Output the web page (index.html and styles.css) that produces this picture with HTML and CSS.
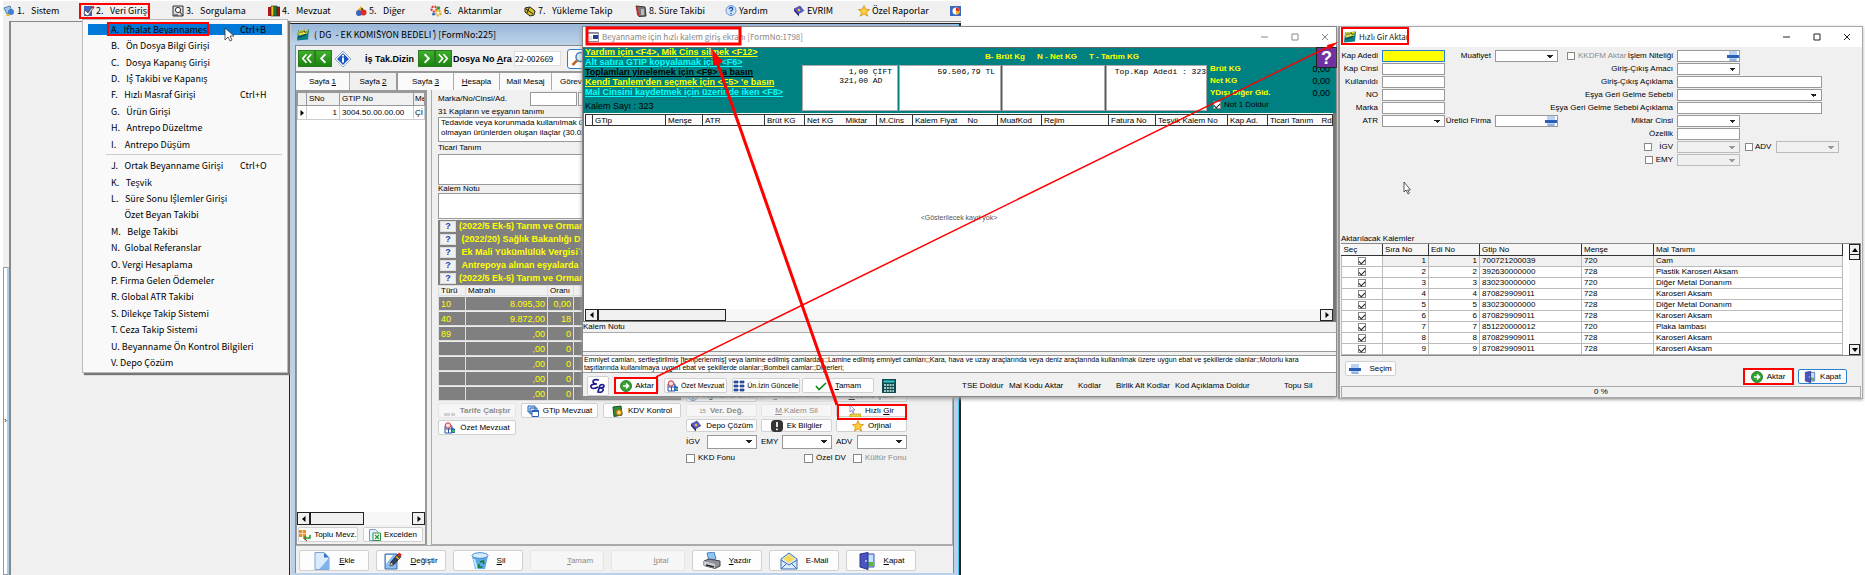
FILE: index.html
```html
<!DOCTYPE html>
<html lang="tr">
<head>
<meta charset="utf-8">
<title>Evrim - Veri Girişi</title>
<link rel="stylesheet" href="styles.css">
</head>
<body>
<svg class="defs" aria-hidden="true">
  <symbol id="i-monitor" viewBox="0 0 12 12"><path d="M1 3l6-2 2 5-5 3z" fill="#9bc8ee" stroke="#5a7fa8"/><circle cx="8" cy="7" r="3" fill="#3f7fd0"/><path d="M4 9h3v2H3z" fill="#e8b73a"/></symbol>
  <symbol id="i-pencil" viewBox="0 0 12 12"><path d="M1 1h8v10H1z" fill="#3c64b8"/><path d="M2 5l3 3 5-7 1 1-6 9-4-2z" fill="#fff" stroke="#333" stroke-width=".7"/><path d="M9 2l2 1" stroke="#d22" stroke-width="1.5"/></symbol>
  <symbol id="i-lens" viewBox="0 0 12 12"><path d="M1 1h10v10H1z" fill="#ddd" stroke="#333"/><circle cx="6" cy="5" r="2.6" fill="#fff" stroke="#333"/><path d="M8 7l3 4M2 10h4" stroke="#333"/></symbol>
  <symbol id="i-books" viewBox="0 0 12 12"><path d="M0 2h3v9H0z" fill="#b01818"/><path d="M3 1h3v10H3z" fill="#e8c820" stroke="#222" stroke-width=".6"/><path d="M6 1h3v10H6z" fill="#1c8a2c" stroke="#222" stroke-width=".6"/><path d="M9 2h3v9H9z" fill="#a81818" stroke="#222" stroke-width=".6"/></symbol>
  <symbol id="i-shapes" viewBox="0 0 12 12"><path d="M1 7l5-6 4 5z" fill="#f0b820"/><circle cx="4" cy="8" r="3" fill="#3c62c8"/><circle cx="8.500" cy="7.500" r="3" fill="#d83020"/><circle cx="7" cy="4" r="1" fill="#333"/></symbol>
  <symbol id="i-gears" viewBox="0 0 12 12"><circle cx="4" cy="4" r="2.500" fill="none" stroke="#d83a2a" stroke-width="2" stroke-dasharray="2 1"/><circle cx="8" cy="8" r="2.500" fill="none" stroke="#e0a818" stroke-width="2" stroke-dasharray="2 1"/><circle cx="8.500" cy="3" r="1.800" fill="#28a048"/><circle cx="3.500" cy="9" r="1.500" fill="#2870c0"/></symbol>
  <symbol id="i-truck" viewBox="0 0 12 12"><path d="M1 3l5-1 5 4-1 4-4 1-5-4z" fill="#d8c020" stroke="#222"/><path d="M2 4l7 5M5 3l-2 5" stroke="#222"/></symbol>
  <symbol id="i-cal" viewBox="0 0 12 12"><path d="M1 1l9 1 1 9-7 .5z" fill="#777" stroke="#333"/><path d="M1 1l1 9 2 1.500-1-9z" fill="#d02820"/><path d="M6 5h3M6 7h3M6 9h3" stroke="#fff"/></symbol>
  <symbol id="i-help" viewBox="0 0 12 12"><circle cx="6" cy="5.500" r="5" fill="#cfe4fa" stroke="#6a9ad0"/><path d="M4.300 4.200q0-1.700 1.700-1.700t1.700 1.600q0 1-1.700 1.900v.8M6 8v1.200" fill="none" stroke="#1850b0" stroke-width="1.300"/></symbol>
  <symbol id="i-book" viewBox="0 0 12 12"><path d="M1 4l6-3 4 5-5 3z" fill="#5a5ad0" stroke="#333370" stroke-width=".6"/><path d="M1 4l5 5v2.500L1 6z" fill="#282868"/><path d="M6 9l5-3v2l-5 3.500z" fill="#eee"/><circle cx="6" cy="5" r="1.300" fill="#f0c030"/></symbol>
  <symbol id="i-star" viewBox="0 0 12 12"><path d="M6 .5l1.600 3.800 4 .3-3 2.600 1 4L6 9l-3.600 2.200 1-4-3-2.600 4-.3z" fill="#ffcb38" stroke="#c98a10" stroke-width=".7"/></symbol>
  <symbol id="i-window" viewBox="0 0 12 12"><path d="M.5 1.500h11v9H.5z" fill="#fff" stroke="#889"/><path d="M1 2h10v1H1z" fill="#99a"/><path d="M6 4h5v4H6z" fill="#223c90"/><path d="M2 6h3M2 8h3" stroke="#bbb"/></symbol>
  <symbol id="i-paint" viewBox="0 0 12 12"><path d="M0 1h12v10H0z" fill="#3c68c0"/><circle cx="6" cy="6" r="3.500" fill="#fff"/><path d="M6 2.500a3.500 3.500 0 013.500 3.500H6z" fill="#e03020"/><path d="M6 6h3.500A3.500 3.500 0 016 9.500z" fill="#f0b020"/></symbol>
  <symbol id="i-evrim" viewBox="0 0 12 11"><path d="M1 1l11-1-1 10-11 1z" fill="#0b7f86"/><path d="M1 4l1-3 9-1-1 4-8 2z" fill="#e6e03a"/><path d="M2 4l2-2 1 1 2-2 1 2 2-1M1 8l8-3" fill="none" stroke="#123" stroke-width=".8"/></symbol>
  <symbol id="i-first" viewBox="0 0 16 16"><path d="M8 3.500L4 8l4 4.500M13 3.500L9 8l4 4.500" fill="none" stroke="#fff" stroke-width="1.800"/></symbol>
  <symbol id="i-prev" viewBox="0 0 16 16"><path d="M10 3.500L5.500 8l4.500 4.500" fill="none" stroke="#fff" stroke-width="2"/></symbol>
  <symbol id="i-next" viewBox="0 0 16 16"><path d="M6 3.500L10.500 8 6 12.500" fill="none" stroke="#fff" stroke-width="2"/></symbol>
  <symbol id="i-last" viewBox="0 0 16 16"><path d="M3 3.500L7 8l-4 4.500M8 3.500L12 8l-4 4.500" fill="none" stroke="#fff" stroke-width="1.800"/></symbol>
  <symbol id="i-info" viewBox="0 0 18 18"><path d="M9 1l8 8-8 8-8-8z" fill="#fff" stroke="#8ba6cc"/><path d="M9 3l6 6-6 6-6-6z" fill="#1c56c4"/><path d="M9 7.500v5M9 4.800v1.700" stroke="#fff" stroke-width="2"/></symbol>
  <symbol id="i-search" viewBox="0 0 16 16"><circle cx="9.500" cy="6" r="4.500" fill="#d4ecff" stroke="#4a7ab4" stroke-width="1.500"/><path d="M6 9.500L1.500 14" stroke="#b8692c" stroke-width="2.500"/></symbol>
  <symbol id="i-dots" viewBox="0 0 12 12"><path d="M1 8v3M3 8v3M5 8v3M8 8v3M10 8v3" stroke="#999" stroke-width=".8"/></symbol>
  <symbol id="i-stack" viewBox="0 0 12 12"><path d="M1 1h7v6H1zM3 3h7v6H3z" fill="#cfe3fa" stroke="#2860b8"/><path d="M5 5.500h6.500v6H5z" fill="#fff" stroke="#2860b8"/><path d="M5 5h6.500v2H5z" fill="#2860b8"/></symbol>
  <symbol id="i-kdv" viewBox="0 0 12 12"><path d="M1 2l8-1 1 9-8 1.500z" fill="#2c8c3c" stroke="#145020"/><circle cx="7" cy="7.500" r="3" fill="#f0b428" stroke="#99600c"/><circle cx="7" cy="7.500" r="1" fill="#fff"/></symbol>
  <symbol id="i-ozet" viewBox="0 0 12 12"><path d="M1 4h7v7H1z" fill="#fff" stroke="#2858a8"/><path d="M1 7h7M4.500 4v7" stroke="#2858a8"/><circle cx="4" cy="3.500" r="2.700" fill="#fdd" stroke="#c83030"/><path d="M7 5l4 2v4H7z" fill="#2c64c0"/><path d="M8 9h3" stroke="#5c5" stroke-width="1.500"/></symbol>
  <symbol id="i-bulk" viewBox="0 0 12 12"><path d="M0 1h7v7H0z" fill="#ee8c28"/><path d="M0 4.500h7M3.500 1v7" stroke="#fbd8a8"/><path d="M11 6v3H5m2-2L5 9l2 2" fill="none" stroke="#2c9a30" stroke-width="1.600"/><path d="M5 9l3 3" stroke="#c83020"/></symbol>
  <symbol id="i-excel" viewBox="0 0 12 12"><path d="M.5.500h6l3 3v8h-9z" fill="#e4effc" stroke="#7b9ccc"/><path d="M4 4h7.500v7.500H4z" fill="#fff" stroke="#2a9440"/><path d="M6 6l4 4m0-4l-4 4" stroke="#2a9440" stroke-width="1.300"/></symbol>
  <symbol id="i-page" viewBox="0 0 16 18"><path d="M1 .5h9l5 5v12H1z" fill="#d9ebfc" stroke="#7ba3d4"/><path d="M15 6v11.500H5z" fill="#7fb4ea"/><path d="M10 .5v5h5z" fill="#3576c8"/></symbol>
  <symbol id="i-edit" viewBox="0 0 18 18"><path d="M1 2h12v15H1z" fill="#8cbcf0" stroke="#3a6cae"/><path d="M2 3h7L2 12z" fill="#fff"/><path d="M6 14l1-4 7-8 3 2.500-7 8z" fill="#344468" stroke="#223"/><path d="M6 14l1-3.500 2 2z" fill="#edc98a"/><path d="M13 3l2-2.500 2.800 2L16 5z" fill="#d82818"/><path d="M12 4.500l3 2.500" stroke="#f0b020" stroke-width="1.500"/></symbol>
  <symbol id="i-bin" viewBox="0 0 18 18"><path d="M1 4l3 13h10l3-13z" fill="#5aa8e4"/><ellipse cx="9" cy="3.500" rx="8" ry="2.800" fill="#d4ecfc" stroke="#4a90d0"/><path d="M3 7l3 10" stroke="#c8e8ff" stroke-width="2"/><path d="M9 10l3-1 1 3M8 12l-.5 3h4" fill="none" stroke="#127a30" stroke-width="1.700"/></symbol>
  <symbol id="i-print" viewBox="0 0 18 18"><path d="M4 1l7-1 2 7-7 2z" fill="#8fc4f4" stroke="#4a80c0"/><path d="M1 9l5-2 11 2v5l-5 2.500-11-3z" fill="#8c9098" stroke="#444"/><path d="M1 9l11 3v4.500l-11-3z" fill="#c9ccd2"/><path d="M3 13l8 2" stroke="#222" stroke-width="1.500"/></symbol>
  <symbol id="i-mail" viewBox="0 0 18 18"><path d="M1 7l8-6 8 6v10H1z" fill="#dcecff" stroke="#3a6ab0"/><path d="M3 7l6-5 6 5-6 4z" fill="#f4dc60"/><path d="M1 8l8 5 8-5M1 17l6-6M17 17l-6-6" fill="none" stroke="#3a6ab0"/></symbol>
  <symbol id="i-door" viewBox="0 0 16 18"><path d="M8 2h7v13H8z" fill="#c0e4ff" stroke="#3a4cae"/><path d="M9 10h5v4H9z" fill="#56b840"/><path d="M1 2l8-1.500v17L1 15z" fill="#4a54c0" stroke="#2a3488"/><path d="M7 8v2" stroke="#fff"/></symbol>
  <symbol id="i-excl" viewBox="0 0 12 12"><rect width="12" height="12" rx="4" fill="#333"/><path d="M6 2v5M6 8.500v1.700" stroke="#fff" stroke-width="1.700"/></symbol>
  <symbol id="i-quick" viewBox="0 0 12 12"><path d="M1 0l5 5H3.500L5 8l-1 .5L2.500 5.500 1 7z" fill="#fff" stroke="#55a" stroke-width=".6"/><path d="M1 9h11v3H1z" fill="#ecd23c" stroke="#a88c10" stroke-width=".6"/></symbol>
  <symbol id="i-eb" viewBox="0 0 18 16"><path d="M10 2Q4 1 4 3.500T8 6Q1 6 2 9t7 0M11 7q4-1 4 1t-4 2q4 0 3 2.500T9 14l2-7" fill="none" stroke="#1c1c90" stroke-width="1.700"/></symbol>
  <symbol id="i-go" viewBox="0 0 12 12"><circle cx="6" cy="6" r="5.500" fill="#36a032" stroke="#1c6a1c" stroke-width=".8"/><path d="M3 6h5M6 3.500L8.500 6 6 8.500" fill="none" stroke="#fff" stroke-width="1.600"/></symbol>
  <symbol id="i-grid" viewBox="0 0 12 12"><path d="M1 1h4v2H1zM7 1h4v2H7zM1 5h4v2H1zM7 5h4v2H7zM1 9h4v2H1zM7 9h4v2H7z" fill="#2c5cb4" stroke="#1c3c88" stroke-width=".7"/></symbol>
  <symbol id="i-check" viewBox="0 0 12 12"><path d="M1 6l3 3.500L11 3" fill="none" stroke="#108a18" stroke-width="1.700"/></symbol>
  <symbol id="i-calc" viewBox="0 0 14 14"><path d="M0 0h14v14H0z" fill="#0c4a4e"/><path d="M1.500 1.500h11v2h-11z" fill="#30c8c8"/><path d="M2 6h10M2 9h10M2 12h10" stroke="#d8f0f0" stroke-width="1.700" stroke-dasharray="2 .8"/></symbol>
  <symbol id="i-bars" viewBox="0 0 12 10"><path d="M2 0h8v10H2z" fill="#bcd2f4"/><path d="M0 4h12v3H0z" fill="#2c5eb4"/><path d="M3 9h6" stroke="#6a90d0"/></symbol>
  <symbol id="i-left" viewBox="0 0 8 8"><path d="M5.500 1v6L2 4z"/></symbol>
  <symbol id="i-right" viewBox="0 0 8 8"><path d="M2.500 1v6L6 4z"/></symbol>
  <symbol id="i-up" viewBox="0 0 8 8"><path d="M1 6h6L4 2z"/></symbol>
  <symbol id="i-down" viewBox="0 0 8 8"><path d="M1 2h6L4 6z"/></symbol>
</svg>

<main class="desktop">
  <section class="app">
    <nav class="menubar">
      <a href="#"><svg><use href="#i-monitor"/></svg>1.&ensp; Sistem</a>
      <a href="#" class="current"><svg><use href="#i-pencil"/></svg>2.&ensp; Veri Girişi</a>
      <a href="#"><svg><use href="#i-lens"/></svg>3.&ensp; Sorgulama</a>
      <a href="#"><svg><use href="#i-books"/></svg>4.&ensp; Mevzuat</a>
      <a href="#"><svg><use href="#i-shapes"/></svg>5.&ensp; Diğer</a>
      <a href="#"><svg><use href="#i-gears"/></svg>6.&ensp; Aktarımlar</a>
      <a href="#"><svg><use href="#i-truck"/></svg>7.&ensp; Yükleme Takip</a>
      <a href="#"><svg><use href="#i-cal"/></svg>8. Süre Takibi</a>
      <a href="#"><svg><use href="#i-help"/></svg>Yardım</a>
      <a href="#"><svg><use href="#i-book"/></svg>EVRIM</a>
      <a href="#"><svg><use href="#i-star"/></svg>Özel Raporlar</a>
      <a href="#" aria-label="Pencere"><svg><use href="#i-paint"/></svg></a>
    </nav>
    <div class="client">
      <aside class="dock"><button type="button">›</button></aside>
      <div class="mdi"></div>
    </div>
  </section>

  <section class="window entry">
    <header class="titlebar"><svg><use href="#i-evrim"/></svg><h1>( DG&nbsp; - EK KOMİSYON BEDELİ ) [FormNo:225]</h1></header>
    <div class="entry-body">
      <div class="finder">
        <button type="button" class="nav" aria-label="İlk"><svg><use href="#i-first"/></svg></button>
        <button type="button" class="nav" aria-label="Önceki"><svg><use href="#i-prev"/></svg></button>
        <svg class="info"><use href="#i-info"/></svg>
        <b class="index">İş Tak.Dizin</b>
        <button type="button" class="nav" aria-label="Sonraki"><svg><use href="#i-next"/></svg></button>
        <button type="button" class="nav" aria-label="Son"><svg><use href="#i-last"/></svg></button>
        <label for="file-no">Dosya No <u>A</u>ra</label>
        <input id="file-no" value="22-002669">
        <button type="button" class="find" aria-label="Ara"><svg><use href="#i-search"/></svg></button>
      </div>
      <div class="tabs">
        <button type="button">Sayfa <u>1</u></button>
        <button type="button" class="on">Sayfa <u>2</u></button>
        <button type="button">Sayfa <u>3</u></button>
        <button type="button"><u>H</u>esapla</button>
        <button type="button">Mail Mesaj</button>
        <button type="button" class="part">Görev</button>
      </div>
      <div class="split">
        <div class="list">
          <table>
            <thead><tr><th></th><th>SNo</th><th>GTIP No</th><th>Me</th></tr></thead>
            <tbody><tr><td><svg><use href="#i-right"/></svg></td><td>1</td><td>3004.50.00.00.00</td><td>Çİ</td></tr></tbody>
          </table>
          <div class="scroll"><button type="button" aria-label="Sola"><svg><use href="#i-left"/></svg></button><i></i><button type="button" aria-label="Sağa"><svg><use href="#i-right"/></svg></button></div>
          <div class="list-actions">
            <button type="button" class="btn"><svg><use href="#i-bulk"/></svg>Toplu Mevz.</button>
            <button type="button" class="btn"><svg><use href="#i-excel"/></svg>Excelden</button>
          </div>
        </div>
        <div class="detail">
          <div class="brand"><label for="brand">Marka/No/Cinsi/Ad.</label><input id="brand"><input aria-label="No"></div>
          <label for="goods">31 Kapların ve eşyanın tanımı</label>
          <textarea id="goods" class="goods">Tedavide veya korunmada kullanılmak üzere
olmayan ürünlerden oluşan ilaçlar (30.02</textarea>
          <label for="trade">Ticari Tanım</label>
          <textarea id="trade" class="trade"></textarea>
          <label for="note">Kalem Notu</label>
          <textarea id="note" class="note"></textarea>
          <ul class="rules">
            <li><button type="button">?</button>(2022/5 Ek-5) Tarım ve Orman</li>
            <li><button type="button">?</button>&nbsp;(2022/20) Sağlık Bakanlığı D</li>
            <li><button type="button">?</button>&nbsp;Ek Mali Yükümlülük Vergisi`n</li>
            <li><button type="button">?</button>&nbsp;Antrepoya alınan eşyalarda t</li>
            <li><button type="button">?</button>(2022/5 Ek-5) Tarım ve Orman</li>
          </ul>
          <table class="tax">
            <thead><tr><th>Türü</th><th>Matrahı</th><th>Oranı</th><th></th></tr></thead>
            <tbody>
              <tr><td>10</td><td>8.095,30</td><td>0,00</td><td></td></tr>
              <tr><td>40</td><td>9.872,00</td><td>18</td><td></td></tr>
              <tr><td>89</td><td>,00</td><td>0</td><td></td></tr>
              <tr><td></td><td>,00</td><td>0</td><td></td></tr>
              <tr><td></td><td>,00</td><td>0</td><td></td></tr>
              <tr><td></td><td>,00</td><td>0</td><td></td></tr>
              <tr><td></td><td>,00</td><td>0</td><td></td></tr>
            </tbody>
          </table>
          <div class="tools">
            <button type="button" class="btn off"><svg><use href="#i-dots"/></svg><b>Tarife Çalıştır</b></button>
            <button type="button" class="btn"><svg><use href="#i-stack"/></svg>GTip Mevzuat</button>
            <button type="button" class="btn"><svg><use href="#i-kdv"/></svg>KDV Kontrol</button>
            <button type="button" class="btn"><svg><use href="#i-ozet"/></svg>Özet Mevzuat</button>
          </div>
          <div class="extras">
            <div class="extra-grid">
              <button type="button" class="btn"><svg><use href="#i-help"/></svg>Ağırlama Birim</button>
              <button type="button" class="btn off"><span><u>T</u>.Kalem Ekle</span></button>
              <button type="button" class="btn"><span><u>Ö</u>deme Şekli</span></button>
              <button type="button" class="btn off"><sup>15</sup><b>Ver. Değ.</b></button>
              <button type="button" class="btn off"><span><u>M</u>.Kalem Sil</span></button>
              <button type="button" class="btn"><svg><use href="#i-quick"/></svg><span>Hızlı <u>G</u>ir</span></button>
              <button type="button" class="btn"><svg><use href="#i-book"/></svg>Depo Çözüm</button>
              <button type="button" class="btn"><svg><use href="#i-excl"/></svg>Ek Bilgiler</button>
              <button type="button" class="btn"><svg><use href="#i-star"/></svg>Orjinal</button>
              <label>İGV <select></select></label>
              <label>EMY <select></select></label>
              <label>ADV <select></select></label>
            </div>
            <div class="funds">
              <label><input type="checkbox">KKD Fonu</label>
              <label><input type="checkbox">Özel DV</label>
              <label class="off"><input type="checkbox" disabled>Kültür Fonu</label>
            </div>
          </div>
        </div>
      </div>
      <footer class="commands">
        <button type="button" class="btn"><svg><use href="#i-page"/></svg><span><u>E</u>kle</span></button>
        <button type="button" class="btn"><svg><use href="#i-edit"/></svg><span><u>D</u>eğiştir</span></button>
        <button type="button" class="btn"><svg><use href="#i-bin"/></svg><span><u>S</u>il</span></button>
        <button type="button" class="btn off"><svg></svg><span><u>T</u>amam</span></button>
        <button type="button" class="btn off"><svg></svg><span><u>İ</u>ptal</span></button>
        <button type="button" class="btn"><svg><use href="#i-print"/></svg><span><u>Y</u>azdır</span></button>
        <button type="button" class="btn"><svg><use href="#i-mail"/></svg><span>E-Mail</span></button>
        <button type="button" class="btn"><svg><use href="#i-door"/></svg><span><u>K</u>apat</span></button>
      </footer>
    </div>
  </section>

  <section class="window quick">
    <header class="titlebar light"><svg><use href="#i-window"/></svg><h1>Beyanname için hızlı kalem giriş ekranı [FormNo:1798]</h1>
      <svg class="winbtns" viewBox="0 0 70 10"><path d="M1 5h7M32 2h6v6h-6zM62 2l6 6m0-6l-6 6" fill="none" stroke="#888"/></svg></header>
    <div class="summary">
      <div class="links">
        <a href="#">Yardım için &lt;F4&gt;, Mik Cins silmek &lt;F12&gt;</a>
        <a href="#" class="cyan">Alt satıra GTIP kopyalamak için &lt;F6&gt;</a>
        <a href="#" class="dark">Toplamları yinelemek için &lt;F9&gt; 'a basın</a>
        <a href="#">Kendi Tanlem'den seçmek için &lt;F5&gt; 'e basın</a>
        <a href="#" class="cyan">Mal Cinsini kaydetmek için üzerinde iken &lt;F8&gt;</a>
        <p>Kalem Sayı : 323</p>
      </div>
      <div class="totals">
        <p class="legend"><span>B- Brüt Kg</span><span>N - Net KG</span><span>T - Tartım KG</span></p>
        <div class="boxes">
          <pre>1,00 ÇİFT
321,00 AD  </pre>
          <pre>59.506,79 TL</pre>
          <pre></pre>
          <pre>Top.Kap Adedi : 323</pre>
        </div>
      </div>
      <dl class="weights">
        <dt>Brüt KG</dt><dd>0,00</dd>
        <dt>Net KG</dt><dd>0,00</dd>
        <dt>YDışı Diğer Gid.</dt><dd>0,00</dd>
        <dt class="full"><label><input type="checkbox" checked>Not 1 Doldur</label></dt>
      </dl>
      <button type="button" class="qmark">?</button>
    </div>
    <div class="grid-area">
      <table>
        <thead><tr><th></th><th>GTip</th><th>Menşe</th><th>ATR</th><th>Brüt KG</th><th class="open">Net KG</th><th>Miktar</th><th>M.Cins</th><th class="open">Kalem Fiyat</th><th>No</th><th>MuafKod</th><th>Rejim</th><th>Fatura No</th><th>Teşvik Kalem No</th><th>Kap Ad.</th><th class="open">Ticari Tanım</th><th>Rd</th></tr></thead>
      </table>
      <p>&lt;Gösterilecek kayıt yok&gt;</p>
      <div class="scroll"><button type="button" aria-label="Sola"><svg><use href="#i-left"/></svg></button><i></i><button type="button" aria-label="Sağa"><svg><use href="#i-right"/></svg></button></div>
    </div>
    <label class="note-label" for="q-note">Kalem Notu</label>
    <textarea id="q-note" class="q-note"></textarea>
    <textarea class="q-desc" aria-label="Tanım">Emniyet camları, sertleştirilmiş [temperlenmiş] veya lamine edilmiş camlardan:;Lamine edilmiş emniyet camları;;Kara, hava ve uzay araçlarında veya deniz araçlarında kullanılmak üzere uygun ebat ve şekillerde olanlar:;Motorlu kara
taşıtlarında kullanılmaya uygun ebat ve şekillerde olanlar:;Bombeli camlar:;Diğerleri;</textarea>
    <footer class="q-bar">
      <button type="button" class="btn logo" aria-label="Evrim"><svg><use href="#i-eb"/></svg></button>
      <button type="button" class="btn send"><svg><use href="#i-go"/></svg>Aktar</button>
      <button type="button" class="btn law"><svg><use href="#i-ozet"/></svg>Özet Mevzuat</button>
      <button type="button" class="btn upd"><svg><use href="#i-grid"/></svg>Ün.İzin Güncelle</button>
      <button type="button" class="btn ok"><svg><use href="#i-check"/></svg><span><u>T</u>amam</span></button>
      <svg class="calc"><use href="#i-calc"/></svg>
      <div class="fills">
        <button type="button">TSE Doldur</button><button type="button">Mal Kodu Aktar</button><button type="button">Kodlar</button><button type="button">Birlik Alt Kodlar</button><button type="button">Kod Açıklama Doldur</button><button type="button">Topu Sil</button>
      </div>
    </footer>
  </section>

  <section class="window transfer">
    <header class="titlebar light"><svg><use href="#i-evrim"/></svg><h1>Hızlı Gir Aktar</h1>
      <svg class="winbtns" viewBox="0 0 70 10"><path d="M1 5h7M32 2h6v6h-6zM62 2l6 6m0-6l-6 6" fill="none" stroke="#222"/></svg></header>
    <form class="form">
      <div class="col one">
        <label for="a1">Kap Adedi</label><input id="a1" class="focus">
        <label for="a2">Kap Cinsi</label><input id="a2">
        <label for="a3">Kullanıldı</label><input id="a3">
        <label for="a4">NO</label><input id="a4">
        <label for="a5">Marka</label><input id="a5">
        <label for="a6">ATR</label><select id="a6"></select>
      </div>
      <div class="col two">
        <label for="b1">Muafiyet</label><select id="b1"></select>
        <label for="b2" class="last">Üretici Firma</label><span class="lookup last"><input id="b2"><svg><use href="#i-bars"/></svg></span>
      </div>
      <label class="off kkdf"><input type="checkbox" disabled>KKDFM Aktar</label>
      <div class="col three">
        <label for="c1">İşlem Niteliği</label><span class="lookup"><input id="c1"><svg><use href="#i-bars"/></svg></span>
        <label for="c2">Giriş-Çıkış Amacı</label><select id="c2"></select>
        <label for="c3">Giriş-Çıkış Açıklama</label><input id="c3" class="wide">
        <label for="c4">Eşya Geri Gelme Sebebi</label><select id="c4" class="wide"></select>
        <label for="c5">Eşya Geri Gelme Sebebi Açıklama</label><input id="c5" class="wide">
        <label for="c6">Miktar Cinsi</label><select id="c6"></select>
        <label for="c7">Özellik</label><input id="c7">
        <label class="tick"><input type="checkbox">İGV</label><div class="pair"><select disabled aria-label="İGV"></select><label><input type="checkbox">ADV</label><select disabled aria-label="ADV"></select></div>
        <label class="tick"><input type="checkbox">EMY</label><select disabled aria-label="EMY"></select>
      </div>
    </form>
    <h2>Aktarılacak Kalemler</h2>
    <div class="items">
      <table>
        <thead><tr><th>Seç</th><th>Sıra No</th><th>Edi No</th><th>Gtip No</th><th>Menşe</th><th>Mal Tanımı</th></tr></thead>
        <tbody>
          <tr class="sel"><td><input type="checkbox" checked aria-label="1"></td><td>1</td><td>1</td><td>700721200039</td><td>720</td><td>Cam</td></tr>
          <tr><td><input type="checkbox" checked aria-label="2"></td><td>2</td><td>2</td><td>392630000000</td><td>728</td><td>Plastik Karoseri Aksam</td></tr>
          <tr><td><input type="checkbox" checked aria-label="3"></td><td>3</td><td>3</td><td>830230000000</td><td>720</td><td>Diğer Metal Donanım</td></tr>
          <tr><td><input type="checkbox" checked aria-label="4"></td><td>4</td><td>4</td><td>870829909011</td><td>728</td><td>Karoseri Aksam</td></tr>
          <tr><td><input type="checkbox" checked aria-label="5"></td><td>5</td><td>5</td><td>830230000000</td><td>728</td><td>Diğer Metal Donanım</td></tr>
          <tr><td><input type="checkbox" checked aria-label="6"></td><td>6</td><td>6</td><td>870829909011</td><td>728</td><td>Karoseri Aksam</td></tr>
          <tr><td><input type="checkbox" checked aria-label="7"></td><td>7</td><td>7</td><td>851220000012</td><td>720</td><td>Plaka lambası</td></tr>
          <tr><td><input type="checkbox" checked aria-label="8"></td><td>8</td><td>8</td><td>870829909011</td><td>728</td><td>Karoseri Aksam</td></tr>
          <tr><td><input type="checkbox" checked aria-label="9"></td><td>9</td><td>9</td><td>870829909011</td><td>728</td><td>Karoseri Aksam</td></tr>
        </tbody>
      </table>
      <div class="vscroll"><button type="button" aria-label="Yukarı"><svg><use href="#i-up"/></svg></button><i></i><button type="button" aria-label="Aşağı"><svg><use href="#i-down"/></svg></button></div>
    </div>
    <footer class="t-bar">
      <button type="button" class="btn pick"><svg><use href="#i-bars"/></svg>Seçim</button>
      <button type="button" class="btn go"><svg><use href="#i-go"/></svg>Aktar</button>
      <button type="button" class="btn close"><svg><use href="#i-door"/></svg>Kapat</button>
    </footer>
    <div class="progress">0 %</div>
  </section>

  <div class="dropdown" role="menu">
    <a href="#" class="hot"><span>A.&ensp;İthalat Beyannamesi</span><kbd>Ctrl+B</kbd></a>
    <a href="#">B.&ensp; Ön Dosya Bilgi Girişi</a>
    <a href="#">C.&ensp; Dosya Kapanış Girişi</a>
    <a href="#">D.&ensp; İş Takibi ve Kapanış</a>
    <a href="#"><span>F.&ensp; Hızlı Masraf Girişi</span><kbd>Ctrl+H</kbd></a>
    <a href="#">G.&ensp; Ürün Girişi</a>
    <a href="#">H.&ensp; Antrepo Düzeltme</a>
    <a href="#">I.&ensp;&nbsp; Antrepo Düşüm</a>
    <hr>
    <a href="#"><span>J.&ensp; Ortak Beyanname Girişi</span><kbd>Ctrl+O</kbd></a>
    <a href="#">K.&ensp; Teşvik</a>
    <a href="#">L.&ensp; Süre Sonu İşlemler Girişi</a>
    <a href="#">&emsp;&ensp;Özet Beyan Takibi</a>
    <a href="#">M.&ensp; Belge Takibi</a>
    <a href="#">N.&ensp;Global Referanslar</a>
    <a href="#">O. Vergi Hesaplama</a>
    <a href="#">P. Firma Gelen Ödemeler</a>
    <a href="#">R. Global ATR Takibi</a>
    <a href="#">S. Dilekçe Takip Sistemi</a>
    <a href="#">T. Ceza Takip Sistemi</a>
    <a href="#">U. Beyanname Ön Kontrol Bilgileri</a>
    <a href="#">V. Depo Çözüm</a>
  </div>

  <svg class="marks" viewBox="0 0 1865 575" aria-hidden="true">
    <g fill="none" stroke="#f00" stroke-width="2">
      <path d="M80 4h69v14H80zM108 23h100v12H108zM615 378h42v15h-42zM838 405h68v14h-68zM1342 28h66v16h-66zM1744 369h49v15h-49z"/>
      <path d="M587 28h153v16H587z" stroke-width="3"/>
      <path d="M837 405L717 62" stroke-width="3"/>
      <path d="M656 377L1330 46" stroke-width="1.500"/>
    </g>
    <path d="M712 49l11 13-10 4zM1338 42l-9 8-2-5z" fill="#f00"/>
    <g fill="#fff" stroke="#333" stroke-width=".8">
      <path d="M225 28v12l3-3 2 4 2-1-2-4h4z"/>
      <path d="M1404 182v10l2-2 2 4 1.500-1-2-3h3z"/>
    </g>
  </svg>
</main>
</body>
</html>
```
FILE: styles.css
```css
:root {
  --menu: "Noto Sans CJK SC", "Open Sans", sans-serif;
  --ui: "Liberation Sans", Arial, sans-serif;
  --face: #f0f0f0;
}
* { box-sizing: border-box; }
body { margin: 0; background: #fff; font: 8px/10px var(--ui); color: #000; }
button, input, select, textarea { font: inherit; color: inherit; margin: 0; padding: 0; border-radius: 0; }
button { background: none; border: 0; white-space: nowrap; }
a { color: inherit; text-decoration: none; }
h1, h2, p, ul, dl, dd, pre { margin: 0; padding: 0; font: inherit; }
svg { width: 12px; height: 12px; flex: none; }
.defs { position: absolute; width: 0; height: 0; }
table { border-collapse: collapse; table-layout: fixed; width: 100%; }
th { font-weight: 400; text-align: left; }
th, td { padding: 0 2px; overflow: hidden; white-space: nowrap; }
label { white-space: nowrap; }
.off { color: #8c8c8c; }

input:not([type]), select, textarea {
  background: #fff; border: 1px solid #999; outline: 0; min-width: 0;
}
textarea { resize: none; overflow: hidden; display: block; width: 100%; padding: 0 2px; }
select {
  appearance: none;
  background-image: conic-gradient(from 315deg at 50% 100%, #222 0 90deg, #fff 0);
  background-position: right 4px center;
  background-size: 6px 3px;
  background-repeat: no-repeat;
}
input[type="checkbox"] {
  appearance: none; width: 9px; height: 9px; border: 1px solid #888; background: #fff; flex: none;
  display: grid; place-items: center;
}
input[type="checkbox"]:checked::after {
  content: ""; width: 3px; height: 5px; margin-bottom: 1px;
  border: solid #222; border-width: 0 1px 1px 0; transform: rotate(45deg);
}
.btn {
  display: flex; align-items: center; justify-content: center; gap: 4px;
  background: #fdfdfd; border: 1px solid #d0d0d0; border-radius: 2px;
}
.btn.off { background: #f6f6f6; border-color: #e6e6e6; }

.desktop { position: relative; min-height: 100vh; overflow: hidden; }
.marks { position: absolute; left: 0; top: 0; width: 1865px; height: 575px; pointer-events: none; }

/* main application */
.app { position: absolute; left: 3px; top: 1px; bottom: 0; width: 958px; background: var(--face); display: flex; flex-direction: column; overflow: hidden; }
.menubar {
  height: 20px; display: grid; align-items: center; font: 9px/12px var(--menu);
  grid-template-columns: 80px 89px 96px 87px 75px 94px 111px 90px 68px 65px 92px 12px;
}
.menubar a { display: flex; align-items: center; gap: 2px; white-space: nowrap; }
.menubar .current { gap: 1px; }
.client { flex: 1; display: flex; }
.dock { width: 6px; padding-top: 246px; display: flex; }
.dock button { flex: 1; border: 1px solid #999; border-right: 2px solid #a8cde8; background: #fff; line-height: 10px; }
.mdi { flex: 1; border: solid #888; border-width: 1px 0 0 2px; }

.dropdown {
  position: absolute; left: 82px; top: 19px; width: 206px; height: 354px; padding: 1px 5px;
  display: flex; flex-direction: column; background: #f9f9f9; font: 9px/11px var(--menu);
  border: 1px solid #bbb; box-shadow: 2px 2px 1px #777;
}
.dropdown a { flex: 1; display: flex; align-items: center; justify-content: space-between; padding: 0 15px 0 23px; white-space: nowrap; }
.dropdown hr { align-self: stretch; height: 1px; margin: 2px 0 2px 18px; border: 0; background: #ccc; }
.dropdown kbd { font: inherit; width: 27px; }
.dropdown .hot { background: linear-gradient(#0078d7, #0078d7) center / 100% 11px no-repeat; }

/* windows */
.window { position: absolute; display: flex; flex-direction: column; background: var(--face); }
.titlebar { display: flex; align-items: center; gap: 5px; font: 9px/12px var(--menu); height: 21px; padding: 0 6px; flex: none; }
.titlebar h1 { white-space: nowrap; }
.titlebar.light { background: #fff; color: #888; height: 20px; font-size: 8px; gap: 3px; padding-left: 4px; }
.titlebar .winbtns { width: 70px; height: 10px; margin-left: auto; }

.entry { left: 289px; top: 23px; bottom: 0; width: 672px; padding: 0 5px 2px; background: #b9d1ea; border: solid #222; border-width: 1px 2px 0 1px; box-shadow: inset -1px 0 #4fc8f0, inset 1px 0 #ddd; }
.entry > .titlebar { background: linear-gradient(#99b7d9, #bed3ea); margin: 0 -4px; }
.entry-body { flex: 1; display: flex; flex-direction: column; background: var(--face); border: 1px solid #888; border-bottom: 0; }
.finder { height: 25px; display: flex; align-items: center; font: bold 9px/12px var(--ui); padding-left: 2px; }
.nav { width: 17px; height: 17px; background: linear-gradient(#3fae2c, #1c8412); border: 1px solid #2a7a20; display: flex; }
.nav svg { width: 100%; height: 100%; }
.finder .info { width: 18px; height: 18px; margin: 0 9px 0 2px; }
.finder .index { width: 57px; text-align: center; }
.finder input { width: 47px; height: 15px; font: 8px/10px var(--menu); border-color: #ddd; margin-right: 6px; }
.finder label { padding-left: 1px; width: 62px; }
.find { width: 24px; height: 20px; border: 1px solid #2a7fd0; border-radius: 3px; background: #fff; display: flex; align-items: center; padding-left: 3px; }
.find svg { width: 16px; height: 16px; }
.tabs { display: grid; grid-template-columns: 54px 48px 56px 46px 52px 60px; height: 19px; background: #fafafa; border-top: 2px solid #999; }
.tabs button { border-right: 1px solid #aaa; line-height: 14px; }
.tabs .on { background: var(--face); border-right: 2px solid #999; }
.tabs .part { text-align: left; padding-left: 8px; }
.split { flex: 1; display: flex; }
.list { width: 131px; display: flex; flex-direction: column; background: #fff; border: 1px solid #999; border-width: 2px 2px 1px 1px; }
.list table { border-right: 1px solid #ccc; }
.list th { background: var(--face); border: 1px solid #999; height: 13px; }
.list td { border: 1px solid #ccc; height: 14px; }
.list tr > :nth-child(1) { width: 9px; padding: 0; }
.list tr > :nth-child(2) { width: 33px; }
.list tr > :nth-child(3) { width: 74px; }
.list tr > :nth-child(4) { padding: 0 1px; }
.list td:nth-child(2) { text-align: right; }
.list td svg { width: 8px; height: 8px; display: block; }
.scroll { display: flex; height: 13px; background: #f7f7f7; margin-top: auto; }
.scroll button { width: 13px; border: 1px solid #222; background: var(--face); display: flex; align-items: center; justify-content: center; }
.scroll svg, .vscroll svg { width: 8px; height: 8px; }
.scroll i { width: 54px; border: 1px solid #222; background: var(--face); }
.scroll button:last-child { margin-left: auto; }
.list-actions { display: grid; grid-template-columns: 60px 60px; gap: 5px; padding: 2px 1px; background: var(--face); }
.list-actions .btn { height: 15px; gap: 3px; }
.detail {
  flex: 1; display: grid; grid-template-columns: 1fr; align-content: start; padding: 1px 0 0 6px; margin-left: 4px;
  border: solid #aaa; border-width: 0 1px 1px 1px; position: relative;
}
.brand { display: grid; grid-template-columns: 91px 47px 60px; gap: 1px; height: 15px; align-items: center; }
.brand input { height: 14px; }
.detail > label { line-height: 11px; }
.goods { height: 25px; }
.trade { height: 31px; }
.note { height: 26px; }
.goods + label { line-height: 12px; }
.trade + label { line-height: 8px; }
.rules { list-style: none; margin-top: 1px; background: #808080; color: #ff0; font: bold 9px/11px var(--ui); padding: 1px 0 0 2px; height: 65px; display: grid; grid-auto-rows: 11px; row-gap: 2px; }
.rules li { display: flex; gap: 3px; white-space: nowrap; }
.rules button { width: 16px; background: var(--face); border: 1px solid #ddd; color: #1a3cb0; line-height: 9px; font-weight: bold; }
.tax { border-collapse: separate; border-spacing: 1px; width: 244px; background: #ddd; color: #ff0; }
.tax thead { color: #000; background: var(--face); }
.tax th { height: 9px; line-height: 9px; }
.tax td { height: 14px; background: #808080; border-top: 1px solid #eee; text-align: right; font: 9px/12px var(--ui); }
.tax td:first-child { text-align: left; }
.tax tr > :nth-child(1) { width: 26px; }
.tax tr > :nth-child(2) { width: 81px; }
.tax tr > :nth-child(3) { width: 25px; }
.tools { display: grid; grid-template-columns: 78px 77px 78px; gap: 2px 5px; padding-top: 2px; }
.tools .btn { height: 15px; }
.extras { position: absolute; left: 254px; top: 299px; display: grid; gap: 4px; }
.extra-grid { display: grid; grid-template-columns: repeat(3, 71px); gap: 2px 4px; }
.extra-grid .btn { height: 13px; }
.extra-grid label { display: flex; align-items: center; justify-content: space-between; height: 15px; }
.extra-grid select { width: 50px; height: 14px; }
.extra-grid sup { font-size: 6px; line-height: 6px; }
.funds { display: flex; }
.funds label { display: flex; align-items: center; gap: 3px; }
.funds label:first-child { width: 118px; }
.funds label:nth-child(2) { width: 49px; }
.commands { height: 28px; flex: none; display: grid; grid-template-columns: 70px 70px 70px 74px 74px 70px 70px 70px; gap: 7px; align-items: center; padding: 2px 3px 0; border-top: 1px solid #aaa; }
.commands .btn { height: 21px; gap: 8px; }
.commands svg { width: 18px; height: 18px; }

/* quick entry */
.quick { left: 582px; top: 26px; width: 755px; height: 371px; border: 1px solid #888; box-shadow: 0 2px 4px #999; }
.summary { background: #008080; height: 66px; display: grid; grid-template-columns: 219px 405px 1fr; border-top: 1px solid #666; position: relative; }
.links { display: grid; grid-auto-rows: 10px; align-content: start; padding-left: 2px; color: #ff0; font: bold 9px/9px var(--ui); }
.links a { text-decoration: underline; white-space: nowrap; }
.links .cyan { color: #0ff; }
.links .dark, .links p { color: #000; }
.links p { font-weight: 400; padding-top: 4px; }
.legend { display: flex; gap: 12px; height: 17px; padding: 4px 0 0 183px; color: #ff0; font-weight: bold; }
.boxes { display: grid; grid-template-columns: 96px 102px 103px 101px; gap: 1px; }
.boxes pre { height: 46px; background: #fff; border: 1px solid #aaa; font: 8px/9px "Liberation Mono", monospace; text-align: right; padding: 1px 5px 0 0; }
.boxes pre:last-child { padding-right: 0; }
.weights { display: grid; grid-template-columns: 1fr 40px; grid-auto-rows: 12px; padding: 15px 6px 0 3px; align-items: center; }
.weights dt { color: #ff0; font-weight: bold; white-space: nowrap; }
.weights dd { text-align: right; font-size: 9px; }
.weights .full { grid-column: 1 / 3; color: #000; font-weight: 400; padding-left: 3px; }
.weights label { display: flex; align-items: center; gap: 3px; }
.weights input { width: 8px; height: 8px; }
.qmark { position: absolute; right: -1px; top: -1px; width: 21px; height: 21px; background: #7030a0; color: #fff; font: bold 18px/18px var(--ui); border: 1px solid #222; }
.grid-area { flex: 1; display: flex; flex-direction: column; background: #fff; border: solid #777; border-width: 0 3px 1px 1px; padding: 1px 0 0 1px; }
.grid-area th { border: 1px solid #333; height: 11px; line-height: 9px; background: #fcfcfc; }
.grid-area th.open { border-right: 0; }
.grid-area th.open + th { border-left: 0; }
.grid-area th:nth-child(1) { width: 7px; }
.grid-area th:nth-child(2) { width: 73px; }
.grid-area th:nth-child(3) { width: 37px; }
.grid-area th:nth-child(4) { width: 62px; }
.grid-area th:nth-child(5) { width: 40px; }
.grid-area th:nth-child(6) { width: 39px; }
.grid-area th:nth-child(7) { width: 33px; }
.grid-area th:nth-child(8) { width: 36px; }
.grid-area th:nth-child(9) { width: 53px; }
.grid-area th:nth-child(10) { width: 32px; }
.grid-area th:nth-child(11) { width: 44px; }
.grid-area th:nth-child(12) { width: 67px; }
.grid-area th:nth-child(13) { width: 47px; }
.grid-area th:nth-child(14) { width: 72px; }
.grid-area th:nth-child(15) { width: 40px; }
.grid-area th:nth-child(16) { width: 53px; }
.grid-area th:nth-child(17) { padding: 0 1px; }
.grid-area p { margin: auto; color: #555; font-size: 7px; }
.grid-area .scroll { height: 12px; margin-top: 0; }
.grid-area .scroll i { width: 128px; }
.note-label { line-height: 10px; border-bottom: 1px solid #aaa; }
.q-note { height: 19px; border-width: 0 0 1px; margin-bottom: 3px; }
.q-desc { height: 18px; font-size: 7px; line-height: 8px; white-space: pre; border-width: 1px 0; padding: 0 1px; }
.q-bar { height: 23px; display: flex; align-items: center; padding: 2px 0 0 4px; flex: none; }
.q-bar .btn { height: 15px; margin-right: 5px; gap: 3px; }
.q-bar .logo { width: 22px; height: 20px; margin-right: 6px; }
.q-bar .logo svg { width: 18px; height: 16px; }
.q-bar .send { width: 44px; }
.q-bar .law { width: 63px; gap: 2px; font-size: 7px; }
.q-bar .upd { width: 68px; margin-right: 2px; gap: 2px; font-size: 7px; }
.q-bar .ok { width: 72px; margin-right: 8px; gap: 8px; }
.q-bar .calc { width: 14px; height: 14px; }
.fills { display: grid; grid-template-columns: 47px 69px 38px 59px 109px 40px; margin-left: 66px; }
.fills button { text-align: left; }

/* transfer */
.transfer { left: 1338px; top: 26px; width: 525px; height: 373px; border: 1px solid #aaa; border-left: 2px solid #999; box-shadow: 0 1px 3px #aaa; padding-left: 1px; }
.transfer .titlebar { color: #222; margin-left: -1px; padding-right: 10px; }
.form { display: grid; grid-template-columns: 104px 113px 72px 1fr; padding-top: 3px; align-items: start; }
.col { display: grid; grid-auto-rows: 12px; gap: 1px 4px; align-items: center; }
.col > label { text-align: right; }
.col input:not([type]), .col select { width: 63px; height: 12px; }
.col.one { grid-template-columns: 37px 63px; }
.col.two { grid-template-columns: 46px 63px; }
.two .last { grid-row: 6; }
.lookup { display: flex; align-items: center; position: relative; width: 63px; }
.lookup svg { position: absolute; right: 1px; top: 1px; width: 12px; height: 10px; }
.form .focus { background: #ff0; border-color: #2a7fd0; }
.kkdf { display: flex; align-items: center; gap: 3px; height: 12px; padding-left: 9px; }
.kkdf input, .tick input, .pair input[type] { width: 8px; height: 8px; }
.col.three { grid-template-columns: 43px 1fr; }
.three > label { justify-self: end; display: flex; align-items: center; gap: 3px; }
.three .tick { gap: 7px; }
.three .tick:nth-last-child(2) { gap: 3px; }
.col.three .wide { width: 145px; }
.pair { display: flex; align-items: center; gap: 5px; }
.pair label { display: flex; align-items: center; gap: 2px; }
.form select:disabled {
  background-color: #f0f0f0; opacity: 1; border-color: #bbb;
  background-image: conic-gradient(from 315deg at 50% 100%, #999 0 90deg, #f0f0f0 0);
}
.transfer h2 { margin-top: auto; line-height: 9px; }
.items { display: flex; height: 113px; border: 1px solid #888; border-width: 1px 1px 1px 0; background: #fff; overflow: hidden; margin-right: 1px; }
.items table { flex: 1; width: auto; }
.items thead th { height: 11px; line-height: 9px; border-bottom: 1px solid #333; border-right: 1px solid #333; background: #f6f6f6; }
.items td { height: 11px; line-height: 10px; border: 1px solid #bbb; padding: 0 2px; }
.items .sel td { background: var(--face); }
.items td:nth-child(1), .items .sel td:nth-child(1) { background: #fff; }
.items td input[type] { width: 8px; height: 8px; margin: 0 auto; }
.items td:nth-child(2), .items td:nth-child(3) { text-align: right; }
.items th:nth-child(1) { width: 41px; }
.items th:nth-child(2) { width: 46px; }
.items th:nth-child(3) { width: 51px; }
.items th:nth-child(4) { width: 102px; }
.items th:nth-child(5) { width: 72px; }
.vscroll { width: 11px; margin-left: 6px; display: flex; flex-direction: column; background: #f7f7f7; }
.vscroll button { height: 11px; border: 1px solid #222; background: var(--face); display: flex; align-items: center; justify-content: center; }
.vscroll i { height: 5px; border: 1px solid #222; border-top: 0; background: var(--face); }
.vscroll button:last-child { margin-top: auto; }
.t-bar { display: flex; height: 30px; padding: 5px 15px 0 4px; }
.t-bar .btn { height: 15px; }
.t-bar .pick { width: 51px; gap: 8px; }
.t-bar .go { width: 50px; margin: 8px 5px 0 auto; }
.t-bar .close { width: 49px; margin-top: 8px; border-color: #2a7fd0; }
.progress { height: 12px; border: 1px solid #aaa; text-align: center; margin-right: 1px; }
```
